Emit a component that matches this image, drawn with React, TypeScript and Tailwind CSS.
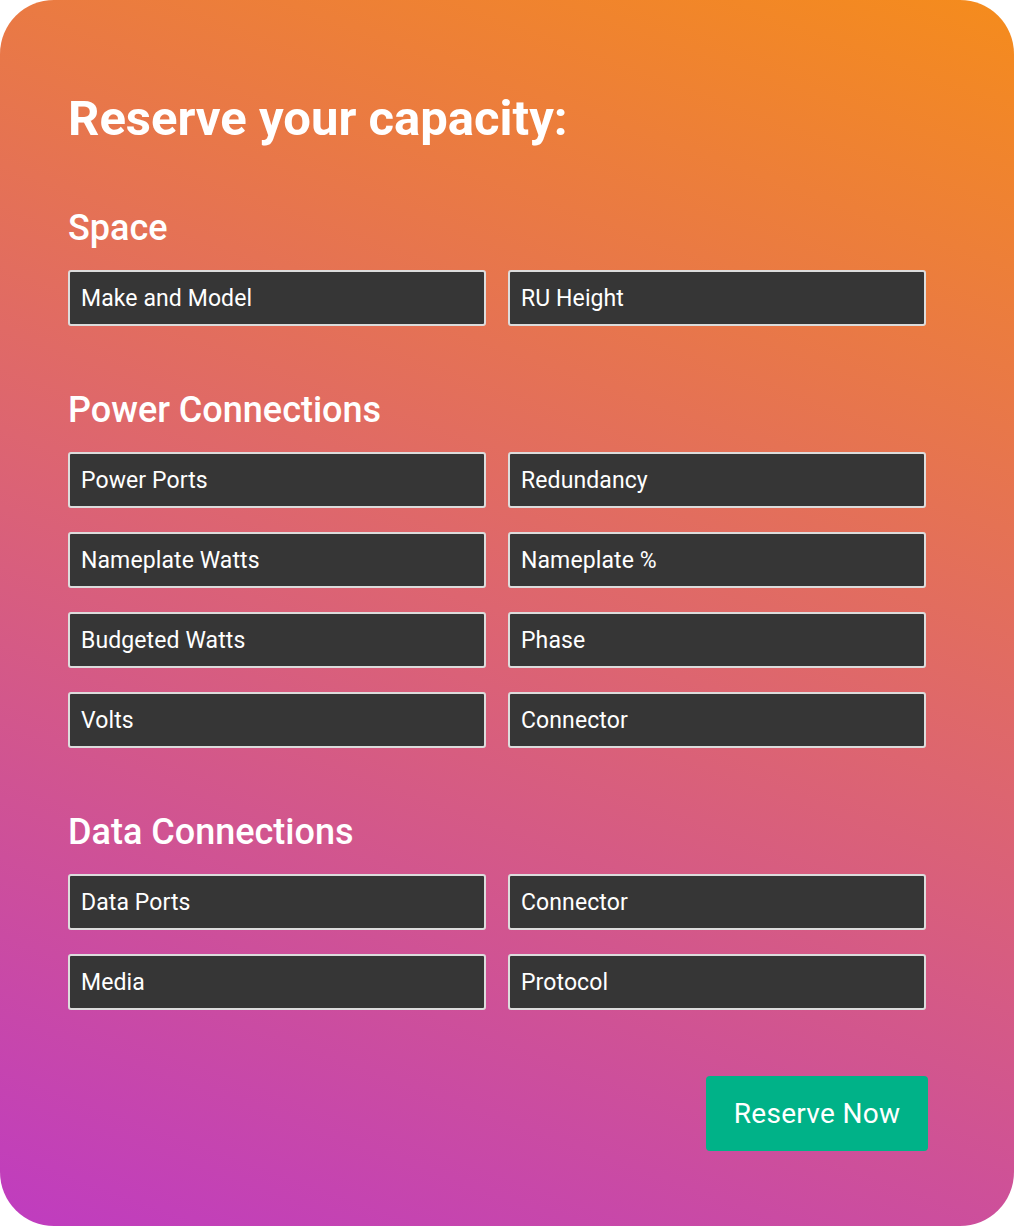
const FONT = "font-['Roboto','Inter',sans-serif]";

function Field({ label }: { label: string }) {
  return (
    <div className="h-[56px] rounded-[3px] border-2 border-[#dcdcdc] bg-[#363636] pl-[11px] pt-[3px] flex items-center">
      <span className="text-[23px] text-white font-['Roboto',sans-serif] tracking-[0.1px]">{label}</span>
    </div>
  );
}

function Section({ title, fields, gapTop }: { title: string; fields: string[]; gapTop: string }) {
  return (
    <div className={gapTop}>
      <h2 className={`${FONT} pt-[2px] text-[36px] leading-[40px] font-medium text-white`}>{title}</h2>
      <div className="mt-[22px] grid grid-cols-2 gap-x-[22px] gap-y-[24px]">
        {fields.map((f, i) => (
          <Field key={i} label={f} />
        ))}
      </div>
    </div>
  );
}

export default function App() {
  return (
    <div className="bg-white w-[1014px] h-[1226px]">
      <div className="w-[1014px] h-[1226px] rounded-[54px] bg-linear-[200deg] from-[#f58c1c] via-[#dd6570] to-[#bf3cc0] pl-[68px] pr-[88px] pt-[91px]">
        <h1 className={`${FONT} text-[49px] leading-[56px] font-bold text-white`}>Reserve your capacity:</h1>
        <Section title="Space" fields={['Make and Model', 'RU Height']} gapTop="mt-[59px]" />
        <Section
          title="Power Connections"
          fields={[
            'Power Ports',
            'Redundancy',
            'Nameplate Watts',
            'Nameplate %',
            'Budgeted Watts',
            'Phase',
            'Volts',
            'Connector',
          ]}
          gapTop="mt-[62px]"
        />
        <Section
          title="Data Connections"
          fields={['Data Ports', 'Connector', 'Media', 'Protocol']}
          gapTop="mt-[62px]"
        />
        <div className="mt-[66px] -mr-[2px] flex justify-end">
          <button className="w-[222px] h-[75px] rounded-[4px] bg-[#00b288] text-white text-[28px] font-['Roboto',sans-serif] tracking-[0.3px]">
            Reserve Now
          </button>
        </div>
      </div>
    </div>
  );
}
